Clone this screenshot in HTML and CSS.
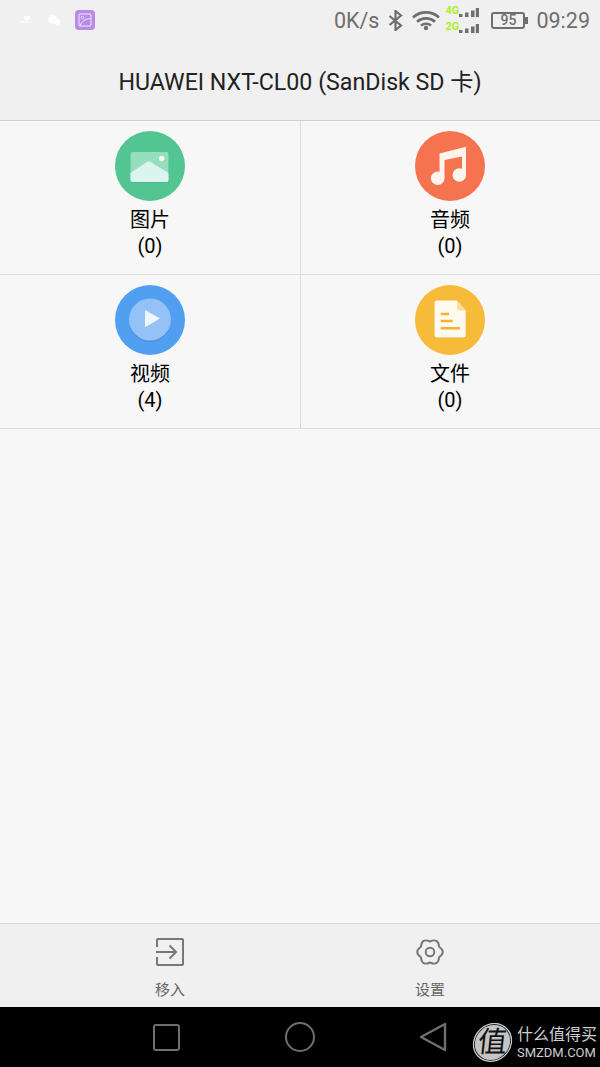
FILE: index.html
```html
<!DOCTYPE html>
<html lang="zh">
<head>
    <title>HUAWEI NXT-CL00 (SanDisk SD 卡)</title>
    <link rel="stylesheet" href="styles.css">
</head>
<body>
    <div class="phone">
        <header class="top-bar">
            <!-- Status bar -->
            <div class="status-bar">
                <div class="status-left">
                    <svg class="note-health" viewBox="0 0 14 10" width="14" height="10">
                        <path d="M4 1.500c1-1.200 2.600-.8 3 .2.400-1 2-1.400 3-.2 1 1.300-.5 3-3 4.500C4.500 4.500 3 2.800 4 1.500z" fill="#fff"/>
                        <path d="M0 7h4l1-1 1 2 1-1h6" fill="none" stroke="#fff" stroke-width=".8"/>
                    </svg>
                    <svg class="note-wechat" viewBox="0 0 13 11" width="13" height="11">
                        <ellipse cx="4.800" cy="4.300" rx="4.600" ry="4" fill="#fff"/>
                        <ellipse cx="9" cy="7" rx="3.800" ry="3.300" fill="#fff" stroke="#f0f0f0" stroke-width=".7"/>
                    </svg>
                    <svg class="note-gallery" viewBox="0 0 20 20" width="20" height="20">
                        <rect width="20" height="20" rx="4" fill="#b98ae6"/>
                        <rect x="4" y="4" width="12" height="12" rx="1" fill="none" stroke="#f3e9fb" stroke-width="1"/>
                        <circle cx="7.500" cy="7.500" r="1.300" fill="none" stroke="#f3e9fb" stroke-width=".8"/>
                        <path d="M5 15.500c2-4.500 5-6.500 10.500-7" fill="none" stroke="#f3e9fb" stroke-width="1"/>
                    </svg>
                </div>
                <div class="status-right">
                    <span class="speed">0K/s</span>
                    <svg class="ic-bluetooth" viewBox="0 0 15 21" width="15" height="21">
                        <path d="M1.500 6L13 15.500 7.500 20V1L13 5.500 1.500 15" fill="none" stroke="#6e6e6e" stroke-width="2.200"/>
                    </svg>
                    <svg class="ic-wifi" viewBox="0 0 28 20" width="28" height="20">
                        <path d="M1 7.500c7.300-6.800 18.700-6.800 26 0M5 11.700c5-4.500 13-4.500 18 0M9 15.500c2.800-2.300 7.200-2.300 10 0" fill="none" stroke="#6e6e6e" stroke-width="2.600"/>
                        <circle cx="14" cy="18" r="2.200" fill="#6e6e6e"/>
                    </svg>
                    <div class="signal">
                        <div class="signal-row">
                            <span class="net">4G</span>
                            <svg viewBox="0 0 20 9" width="20" height="9">
                                <path d="M0 6h3.500v3H0zM6 4.500h3.500V9H6zM12 2.500h3.500V9H12zM16.800 0h3.200v9h-3.200z" fill="#6e6e6e"/>
                            </svg>
                        </div>
                        <div class="signal-row">
                            <span class="net">2G</span>
                            <svg viewBox="0 0 20 9" width="20" height="9">
                                <path d="M0 6h3.500v3H0zM6 4.500h3.500V9H6zM12 2.500h3.500V9H12zM16.800 0h3.200v9h-3.200z" fill="#6e6e6e"/>
                            </svg>
                        </div>
                    </div>
                    <div class="battery"><span>95</span></div>
                    <span class="clock">09:29</span>
                </div>
            </div>
            <h1 class="title">HUAWEI NXT-CL00 (SanDisk SD 卡)</h1>
        </header>

        <!-- Category grid -->
        <main class="categories">
            <a class="cat">
                <svg class="cat-icon" viewBox="0 0 70 70">
                    <circle cx="35" cy="35" r="35" fill="#52c592"/>
                    <rect x="15.500" y="21.600" width="38" height="30" rx="2" fill="#46b283"/>
                    <rect x="15.500" y="21" width="38" height="30" rx="2" fill="#96dfbe"/>
                    <path d="M15.500 42l16-10.800c1.500-.9 3-.9 4.500 0L53.500 42v7a2 2 0 0 1-2 2h-34a2 2 0 0 1-2-2z" fill="#dcf4ef"/>
                    <circle cx="46.700" cy="27.500" r="2.700" fill="#f2fbf7"/>
                </svg>
                <span class="cat-name">图片</span>
                <span class="cat-count">(0)</span>
            </a>
            <a class="cat">
                <svg class="cat-icon" viewBox="0 0 70 70">
                    <circle cx="35" cy="35" r="35" fill="#f6734f"/>
                    <path d="M24.500 47V22.500L51 15.700V44h-4V25.500L29.500 29v18z" fill="#fff3ee"/>
                    <circle cx="22.700" cy="47.300" r="6.800" fill="#fff3ee"/>
                    <circle cx="44.300" cy="44" r="6.800" fill="#fff3ee"/>
                </svg>
                <span class="cat-name">音频</span>
                <span class="cat-count">(0)</span>
            </a>
            <a class="cat">
                <svg class="cat-icon" viewBox="0 0 70 70">
                    <circle cx="35" cy="35" r="35" fill="#519ff0"/>
                    <circle cx="35" cy="36" r="21" fill="#4a8fe6"/>
                    <circle cx="35" cy="34.500" r="21" fill="#94c2f6"/>
                    <path d="M30 25l15 8.500L30 42.300z" fill="#eef6fe"/>
                </svg>
                <span class="cat-name">视频</span>
                <span class="cat-count">(4)</span>
            </a>
            <a class="cat">
                <svg class="cat-icon" viewBox="0 0 70 70">
                    <circle cx="35" cy="35" r="35" fill="#f6bb38"/>
                    <path d="M19.500 18a2 2 0 0 1 2-2h20.500l8.700 9.700V51a2 2 0 0 1-2 2H21.500a2 2 0 0 1-2-2z" fill="#eeaa2a"/>
                    <path d="M19.500 17.500a2 2 0 0 1 2-2h20.500l8.700 10V50.500a2 2 0 0 1-2 2H21.500a2 2 0 0 1-2-2z" fill="#fffaf0"/>
                    <path d="M42 15.500l8.700 10h-7a1.700 1.700 0 0 1-1.700-1.700z" fill="#f8dfa0"/>
                    <path d="M25.700 29H34M25.700 36h12M25.700 43.300H45" stroke="#f7b02f" stroke-width="2.400"/>
                </svg>
                <span class="cat-name">文件</span>
                <span class="cat-count">(0)</span>
            </a>
        </main>

        <!-- Bottom actions -->
        <footer class="toolbar">
            <a class="tool">
                <svg viewBox="0 0 28 28" width="28" height="28">
                    <path d="M1 9V2a1 1 0 0 1 1-1h24a1 1 0 0 1 1 1v24a1 1 0 0 1-1 1H2a1 1 0 0 1-1-1v-7" fill="none" stroke="#777" stroke-width="2"/>
                    <path d="M0 14h20M13.500 7.500L20 14l-6.500 6.500" fill="none" stroke="#777" stroke-width="2"/>
                </svg>
                <span>移入</span>
            </a>
            <a class="tool">
                <svg viewBox="0 0 28 28" width="28" height="28">
                    <path d="M23.100 8.750Q30.500 14 23.100 19.250Q22.250 28.300 14 24.500Q5.750 28.300 4.900 19.250Q-2.500 14 4.900 8.750Q5.750-.3 14 3.500Q22.250-.3 23.100 8.750z" fill="none" stroke="#777" stroke-width="2" stroke-linejoin="round"/>
                    <circle cx="14" cy="14" r="4.300" fill="none" stroke="#777" stroke-width="2"/>
                </svg>
                <span>设置</span>
            </a>
        </footer>

        <!-- Android nav buttons -->
        <nav class="nav-bar">
            <div class="nav-slot">
                <span class="nav-square"></span>
            </div>
            <div class="nav-slot">
                <span class="nav-circle"></span>
            </div>
            <div class="nav-slot">
                <svg viewBox="0 0 28 30" width="28" height="30">
                    <path d="M26 2v26L2 15z" fill="none" stroke="#6f6f6f" stroke-width="2.400" stroke-linejoin="round"/>
                </svg>
            </div>
        </nav>

        <!-- Site watermark -->
        <div class="watermark">
            <span class="wm-badge">值</span>
            <div class="wm-text">
                <span class="wm-cn">什么值得买</span>
                <span class="wm-en">SMZDM.COM</span>
            </div>
        </div>
    </div>
</body>
</html>
```

FILE: styles.css
```css
* {
    box-sizing: border-box;
}

body {
    margin: 0;
    padding: 0;
    font-family: Roboto, "Noto Sans CJK SC", sans-serif;
    background-color: #f7f7f7;
}

.phone {
    position: relative;
    width: 600px;
    height: 1067px;
    display: flex;
    flex-direction: column;
    overflow: hidden;
}

.top-bar {
    height: 121px;
    background-color: #f0f0f0;
    border-bottom: 1px solid #cfcfcf;
}

.status-bar {
    height: 40px;
    display: flex;
    justify-content: space-between;
    align-items: center;
    padding: 0 10px 0 20px;
}

.status-left {
    display: flex;
    align-items: center;
    gap: 14px;
}

.status-right {
    display: flex;
    align-items: center;
    color: #6e6e6e;
}

.speed {
    font-size: 21.500px;
    margin-right: 9px;
}

.ic-bluetooth {
    margin-right: 9px;
}

.ic-wifi {
    margin-right: 5px;
}

.signal {
    display: flex;
    flex-direction: column;
    gap: 4px;
    margin: -2px 12px 0 0;
}

.signal-row {
    display: flex;
    align-items: flex-end;
    height: 12px;
}

.net {
    width: 14px;
    font-size: 11px;
    line-height: 11px;
    font-weight: 700;
    color: #a9ef2d;
    align-self: flex-start;
}

.battery {
    position: relative;
    width: 34px;
    height: 17px;
    margin-right: 11px;
    border: 2px solid #6e6e6e;
    border-radius: 3px;
    display: flex;
    align-items: center;
    justify-content: center;
    font-size: 14px;
    font-weight: 500;
}

.battery::after {
    content: "";
    position: absolute;
    right: -5px;
    top: 3px;
    width: 3px;
    height: 7px;
    background-color: #6e6e6e;
}

.clock {
    font-size: 21.500px;
}

.title {
    margin: 0;
    height: 80px;
    padding-top: 2px;
    line-height: 80px;
    text-align: center;
    font-size: 23.200px;
    font-weight: 400;
    color: #222;
}

.categories {
    display: grid;
    grid-template-columns: 1fr 1fr;
    grid-auto-rows: 154px;
    flex: 1;
}

.cat {
    display: flex;
    flex-direction: column;
    align-items: center;
    padding-top: 10px;
    border-bottom: 1px solid #dcdcdc;
    color: #000;
}

/* divider drawn as a shadow so both columns stay centred */
.cat:nth-child(even) {
    box-shadow: inset 1px 0 0 #dcdcdc;
}

.cat-icon {
    width: 70px;
    height: 70px;
}

.cat-name {
    margin-top: 5px;
    font-size: 20px;
    line-height: 28px;
}

.cat-count {
    margin-top: -1px;
    font-size: 20px;
    line-height: 26px;
}

.toolbar {
    height: 84px;
    display: grid;
    grid-template-columns: 1fr 1fr;
    padding: 0 40px;
    background-color: #f0f0f0;
    border-top: 1px solid #d8d8d8;
}

.tool {
    display: flex;
    flex-direction: column;
    align-items: center;
    padding-top: 14px;
    color: #666;
    font-size: 15px;
    line-height: 20px;
    gap: 14px;
}

.nav-bar {
    height: 60px;
    background-color: #000;
    display: grid;
    grid-template-columns: 133px 133px 133px;
    justify-content: center;
    align-items: center;
}

.nav-slot {
    display: flex;
    justify-content: center;
}

.nav-square {
    width: 27px;
    height: 27px;
    margin-right: 1px;
    border: 2.500px solid #6f6f6f;
    border-radius: 3px;
}

.nav-circle {
    width: 30px;
    height: 30px;
    border: 2.500px solid #6f6f6f;
    border-radius: 50%;
}

/* sits on top of the nav bar */
.watermark {
    position: absolute;
    right: 3px;
    bottom: 5px;
    display: flex;
    align-items: center;
    gap: 5px;
    color: #cfcfcf;
}

.wm-badge {
    width: 39px;
    height: 39px;
    border-radius: 50%;
    background-color: #c4c4c4;
    border: 1px solid #d4d4d4;
    box-shadow: inset 0 0 0 1px #222;
    color: #111;
    font-size: 29px;
    line-height: 36px;
    text-align: center;
    transform: skewX(-6deg);
}

.wm-text {
    display: flex;
    flex-direction: column;
}

.wm-cn {
    font-size: 16px;
    line-height: 20px;
}

.wm-en {
    font-size: 13px;
    line-height: 16px;
}
```
